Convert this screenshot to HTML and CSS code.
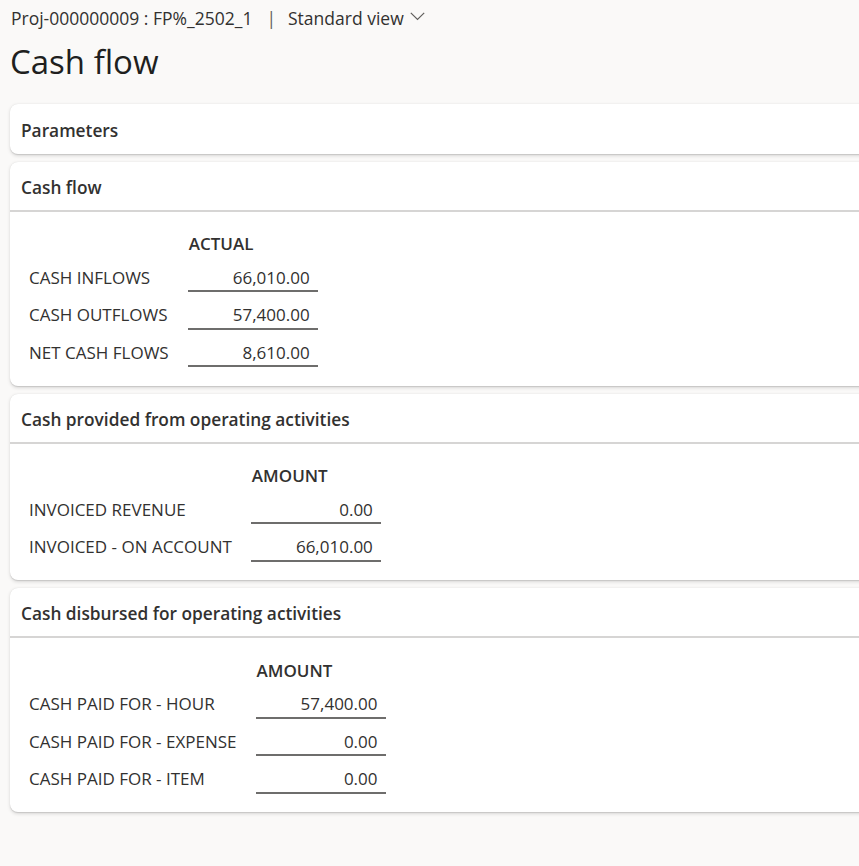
FILE: index.html
```html
<!DOCTYPE html>
<html lang="en">
<head>
<meta charset="utf-8">
<title>Cash flow</title>
<link rel="stylesheet" href="styles.css">
</head>
<body>
<div class="page">
  <div class="crumb">
    <span class="crumb-id">Proj-000000009 : FP%_2502_1</span>
    <span class="crumb-sep">|</span>
    <span class="crumb-view">Standard view</span>
    <svg class="chev" width="15" height="9" viewBox="0 0 15 9"><polyline points="0.8,0.8 7.5,7.5 14.2,0.8" fill="none" stroke="#605e5c" stroke-width="1.2"/></svg>
  </div>
  <h1 class="title">Cash flow</h1>

  <div class="cards">
    <section class="card">
      <div class="card-head">Parameters</div>
    </section>

    <section class="card">
      <div class="card-head lined">Cash flow</div>
      <div class="card-body">
        <div class="grid">
          <div class="cell head-label"></div>
          <div class="cell col-head">ACTUAL</div>
          <div class="cell label">CASH INFLOWS</div>
          <div class="cell value">66,010.00</div>
          <div class="cell label">CASH OUTFLOWS</div>
          <div class="cell value">57,400.00</div>
          <div class="cell label">NET CASH FLOWS</div>
          <div class="cell value">8,610.00</div>
        </div>
      </div>
    </section>

    <section class="card">
      <div class="card-head lined">Cash provided from operating activities</div>
      <div class="card-body">
        <div class="grid">
          <div class="cell head-label"></div>
          <div class="cell col-head">AMOUNT</div>
          <div class="cell label">INVOICED REVENUE</div>
          <div class="cell value">0.00</div>
          <div class="cell label">INVOICED - ON ACCOUNT</div>
          <div class="cell value">66,010.00</div>
        </div>
      </div>
    </section>

    <section class="card">
      <div class="card-head lined">Cash disbursed for operating activities</div>
      <div class="card-body">
        <div class="grid">
          <div class="cell head-label"></div>
          <div class="cell col-head">AMOUNT</div>
          <div class="cell label">CASH PAID FOR - HOUR</div>
          <div class="cell value">57,400.00</div>
          <div class="cell label">CASH PAID FOR - EXPENSE</div>
          <div class="cell value">0.00</div>
          <div class="cell label">CASH PAID FOR - ITEM</div>
          <div class="cell value">0.00</div>
        </div>
      </div>
    </section>
  </div>
</div>
</body>
</html>
```

FILE: styles.css
```css
html, body {
  margin: 0;
  padding: 0;
  background: #faf9f8;
  overflow-x: hidden;
}

body {
  font-family: "Open Sans", "Noto Sans", "Liberation Sans", sans-serif;
  color: #323130;
}

.page {
  padding: 0 0 40px 0;
}

.crumb {
  display: flex;
  align-items: center;
  height: 36px;
  padding-left: 11px;
  font-size: 17.5px;
  color: #323130;
  white-space: nowrap;
}

.crumb-sep {
  margin: 0 12px 0 14px;
  color: #605e5c;
}

.chev {
  margin-left: 6px;
  margin-top: -3px;
}

.title {
  margin: 4px 0 0 10px;
  font-size: 33px;
  font-weight: 400;
  line-height: 44px;
  color: #201f1e;
}

.cards {
  margin-top: 20px;
  margin-left: 10px;
  margin-right: -30px;
  display: flex;
  flex-direction: column;
  gap: 8px;
}

.card {
  background: #ffffff;
  border-radius: 8px;
  box-shadow: 0 1.6px 3.6px rgba(0, 0, 0, 0.13), 0 0.3px 0.9px rgba(0, 0, 0, 0.11);
}

.card-head {
  height: 49.5px;
  box-sizing: border-box;
  display: flex;
  align-items: center;
  padding: 3px 0 0 11px;
  font-size: 17.3px;
  font-weight: 600;
  color: #323130;
}

.card-head.lined {
  height: 50px;
  border-bottom: 2px solid #d6d5d4;
}

.card-body {
  padding: 22px 18px 18.5px 18px;
}

.grid {
  display: grid;
  grid-template-columns: max-content 130px;
  column-gap: 19px;
  font-size: 17px;
}

.cell {
  line-height: 22px;
  box-sizing: border-box;
}

.head-label,
.col-head {
  height: 21px;
  display: flex;
  align-items: center;
}

.col-head {
  padding-left: 1px;
  font-weight: 600;
}

.label,
.value {
  height: 37.5px;
  display: flex;
  align-items: flex-end;
  padding-bottom: 1.5px;
  border-bottom: 2px solid transparent;
}

.label {
  padding-left: 1px;
}

.value {
  justify-content: flex-end;
  padding-right: 8px;
  border-bottom-color: #6e6d6c;
}
```
